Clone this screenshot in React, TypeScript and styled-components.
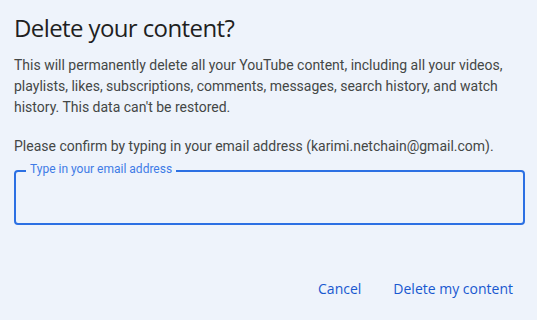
import React from 'react'
import styled, { createGlobalStyle } from 'styled-components'

const GlobalStyle = createGlobalStyle`
  html, body {
    margin: 0;
    padding: 0;
    background: #eef3fb;
  }
`

function App() {
  return (
    <>
      <GlobalStyle />
      <Dialog>
        <Title>Delete your content?</Title>
        <Body>
          This will permanently delete all your YouTube content, including all your videos,
          playlists, likes, subscriptions, comments, messages, search history, and watch
          history. This data can't be restored.
        </Body>
        <Body>Please confirm by typing in your email address (karimi.netchain@gmail.com).</Body>
        <Field>
          <Legend>Type in your email address</Legend>
          <Input type="email" />
        </Field>
        <Actions>
          <TextButton>Cancel</TextButton>
          <TextButton>Delete my content</TextButton>
        </Actions>
      </Dialog>
    </>
  )
}

export default App

const Dialog = styled.div`
  width: 537px;
  height: 320px;
  box-sizing: border-box;
  padding: 12px 12px 0 14px;
  background: #eef3fb;
  display: flex;
  flex-direction: column;
`

const Title = styled.h1`
  margin: 0;
  font-family: 'Open Sans', sans-serif;
  font-size: 24px;
  font-weight: 400;
  letter-spacing: -0.6px;
  line-height: 32px;
  color: #1f1f1f;
`

const Body = styled.p`
  margin: 11px 0 0;
  font-family: Roboto, sans-serif;
  font-size: 14px;
  line-height: 21px;
  color: #444746;

  & + & {
    margin-top: 18px;
  }
`

const Field = styled.fieldset`
  margin: 6px 0 0;
  padding: 0 10px;
  height: 62px;
  box-sizing: border-box;
  border: 2px solid #2c70e3;
  border-radius: 4px;
`

const Legend = styled.legend`
  padding: 0 4px 4px;
  font-family: Roboto, sans-serif;
  font-size: 12px;
  line-height: 12px;
  color: #3f7be6;
`

const Input = styled.input`
  width: 100%;
  border: none;
  outline: none;
  background: transparent;
  font-family: Roboto, sans-serif;
  font-size: 16px;
  height: 36px;
`

const Actions = styled.div`
  display: flex;
  justify-content: flex-end;
  gap: 8px;
  margin-top: 43px;
`

const TextButton = styled.button`
  border: none;
  background: transparent;
  padding: 0 12px;
  height: 40px;
  border-radius: 20px;
  font-family: 'Open Sans', sans-serif;
  font-size: 14px;
  font-weight: 500;
  color: #1858d0;
  cursor: pointer;
`
